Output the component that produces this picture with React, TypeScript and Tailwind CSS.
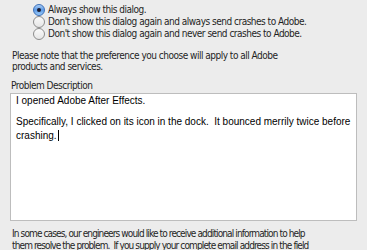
import React from 'react';

const dialogFont = { fontFamily: '"DejaVu Sans Condensed", "DejaVu Sans", sans-serif' };

function Radio({ checked }: { checked?: boolean }) {
  if (checked) {
    return (
      <span className="flex h-[12px] w-[12px] shrink-0 items-center justify-center rounded-full border border-[#3d6fb8] bg-gradient-to-b from-[#a9cdf5] via-[#5c9ae6] to-[#9ccbf7]">
        <span className="h-[4px] w-[4px] rounded-full bg-[#1a1a2e]" />
      </span>
    );
  }
  return (
    <span className="h-[12px] w-[12px] shrink-0 rounded-full border border-[#8c8c8c] bg-gradient-to-b from-[#fafafa] to-[#e6e6e6]" />
  );
}

export default function App() {
  const options = [
    { label: 'Always show this dialog.', checked: true },
    { label: "Don't show this dialog again and always send crashes to Adobe." },
    { label: "Don't show this dialog again and never send crashes to Adobe." },
  ];

  return (
    <div
      className="h-[250px] w-[367px] overflow-hidden bg-[#ececec] text-[10px] leading-[12px] tracking-[-0.5px] text-[#1f1f1f] font-stretch-condensed"
      style={dialogFont}
    >
      {/* Crash reporting preference */}
      <div className="flex flex-col pl-[33px] pt-[4px]">
        {options.map(({ label, checked }) => (
          <div key={label} className="flex h-[12px] items-center gap-[3px]">
            <Radio checked={checked} />
            <span>{label}</span>
          </div>
        ))}
      </div>

      <p className="mt-[10px] pl-[12px] pr-[20px] leading-[11px]">
        Please note that the preference you choose will apply to all Adobe
        <br />
        products and services.
      </p>

      <div className="mt-[8px] pl-[11px]">Problem Description</div>

      {/* Problem description field */}
      <div
        className="mx-[10px] mt-[1px] h-[128px] border border-[#bdbdbd] bg-white px-[5px] pt-[2px] text-[10px] leading-[10.5px] tracking-normal text-black font-stretch-normal"
        style={{ fontFamily: '"Liberation Sans", Arial, sans-serif' }}
      >
        <p>I opened Adobe After Effects.</p>
        <p className="mt-[10.5px]">
          Specifically, I clicked on its icon in the dock.&nbsp; It bounced merrily twice before
          <br />
          crashing.
          <span className="ml-[1px] inline-block h-[11px] w-[1px] translate-y-[2px] bg-black" />
        </p>
      </div>

      <p className="mt-[7px] whitespace-nowrap pl-[12px] leading-[12px] tracking-[-0.88px]">
        In some cases, our engineers would like to receive additional information to help
        <br />
        them resolve the problem.&nbsp; If you supply your complete email address in the field
        <br />
        below, which will be used only to contact you if more information is needed.
      </p>
    </div>
  );
}
